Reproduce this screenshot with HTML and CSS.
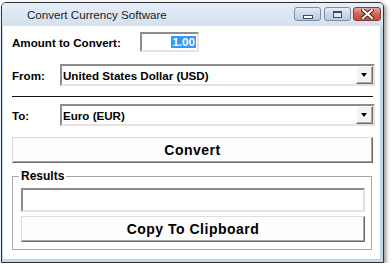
FILE: index.html
```html
<!DOCTYPE html>
<html lang="en">

<head>
	<meta charset="UTF-8">
	<title>Convert Currency Software</title>
	<link rel="stylesheet" href="styles.css">
</head>

<body>
	<div class="window">
		<div class="titlebar">
			<span class="title">Convert Currency Software</span>
			<div class="controls">
				<span class="ctl min"><i></i></span>
				<span class="ctl max"><i></i></span>
				<span class="ctl close">
					<svg width="13" height="10" viewBox="0 0 13 10">
						<path d="M2 1 L11 9 M11 1 L2 9" stroke="#3a2a2a" stroke-width="4" stroke-linecap="square" />
						<path d="M2 1 L11 9 M11 1 L2 9" stroke="#fff" stroke-width="2" stroke-linecap="square" />
					</svg>
				</span>
			</div>
		</div>

		<div class="client">
			<div class="row amount">
				<label>Amount to Convert:</label>
				<div class="field small"><span class="sel">1.00</span></div>
			</div>

			<div class="row pick">
				<label>From:</label>
				<div class="combo">
					<span class="value">United States Dollar (USD)</span>
					<span class="drop"></span>
				</div>
			</div>

			<div class="divider"></div>

			<div class="row pick to">
				<label>To:</label>
				<div class="combo">
					<span class="value">Euro (EUR)</span>
					<span class="drop"></span>
				</div>
			</div>

			<div class="btn convert">Convert</div>

			<fieldset class="results">
				<legend>Results</legend>
				<div class="field wide"></div>
				<div class="btn copy">Copy To Clipboard</div>
			</fieldset>
		</div>
	</div>
</body>

</html>
```

FILE: styles.css
```css
* {
	margin: 0;
	padding: 0;
	box-sizing: border-box;
}

body {
	background: #fff;
	font-family: "Liberation Sans", Arial, sans-serif;
	color: #000;
}

.window {
	width: 383px;
	height: 261px;
	margin: 2px 0 0 1px;
	border: 1px solid #2e3338;
	border-radius: 5px 5px 0 0;
	box-shadow: 2px 2px 4px rgba(0, 0, 0, 0.45);
	background: #c4d8ec;
	display: flex;
	flex-direction: column;
	overflow: hidden;
}

/* title bar */
.titlebar {
	height: 23px;
	display: flex;
	justify-content: space-between;
	align-items: flex-start;
	background: linear-gradient(#e6eef8, #d3e0ef);
}

.title {
	padding: 5px 0 0 25px;
	font-size: 11.6px;
	color: #1c1c1c;
}

.controls {
	display: flex;
	padding-top: 4px;
	padding-right: 2px;
}

.ctl {
	width: 27px;
	height: 14px;
	border: 1px solid #7a8ea8;
	border-radius: 3px;
	background: linear-gradient(#e4ecf6, #c9d7e9 55%, #b9cbe2);
	display: flex;
	align-items: center;
	justify-content: center;
}

.ctl.max {
	margin-left: 3px;
}

.ctl.close {
	width: 28px;
	margin-left: 2px;
	border-color: #8a3a33;
	background: linear-gradient(#e8a99c, #d2654f 50%, #c44d3a);
}

.min i {
	width: 10px;
	height: 4px;
	margin-top: 5px;
	border: 1px solid #3b4d66;
	background: #fff;
}

.max i {
	width: 9px;
	height: 7px;
	border: 1px solid #3b4d66;
	border-top-width: 2px;
	background: #dfe8f3;
}

/* window body */
.client {
	flex: 1;
	margin: 0 3px 3px 1px;
	background: #fff;
	padding: 6px 0 0 9px;
	font-size: 11.6px;
	font-weight: bold;
}

.row {
	display: flex;
	align-items: center;
}

.amount label {
	width: 128px;
}

.field {
	background: #fff;
	border: 2px solid;
	border-color: #8d8d8d #e3e3e3 #e3e3e3 #8d8d8d;
}

.field.small {
	width: 59px;
	height: 20px;
	display: flex;
	justify-content: flex-end;
	align-items: center;
	padding-right: 1px;
}

.sel {
	background: #3399ff;
	color: #fff;
	line-height: 12px;
	padding: 0 1px;
}

.pick {
	margin-top: 12px;
}

.pick label {
	width: 48px;
}

.pick.to {
	margin-top: 7px;
}

.combo {
	width: 315px;
	height: 22px;
	border: 2px solid;
	border-color: #8d8d8d #e3e3e3 #e3e3e3 #8d8d8d;
	display: flex;
	align-items: center;
	justify-content: space-between;
	padding-left: 1px;
}

.drop {
	width: 17px;
	height: 18px;
	background: #f3f3f3;
	border: 1px solid;
	border-color: #fff #6e6e6e #6e6e6e #fff;
	box-shadow: inset -1px -1px #a8a8a8;
	display: flex;
	align-items: center;
	justify-content: center;
}

.drop::after {
	content: "";
	border-left: 3px solid transparent;
	border-right: 3px solid transparent;
	border-top: 4px solid #000;
	margin-left: -1px;
}

.divider {
	width: 361px;
	height: 1px;
	margin-top: 10px;
	background: #111;
}

.btn {
	height: 26px;
	background: #fdfdfd;
	border: 1px solid;
	border-color: #dedede #6a6a6a #6a6a6a #dedede;
	box-shadow: inset -1px -1px #a4a4a4;
	display: flex;
	align-items: center;
	justify-content: center;
	font-size: 14px;
	letter-spacing: 0.5px;
}

.convert {
	width: 361px;
	margin-top: 11px;
}

.results {
	width: 360px;
	margin-top: 7px;
	border: 1px solid #a6a6a6;
	padding: 5px 6px 7px 8px;
}

.results legend {
	font-size: 12px;
	line-height: 13px;
	padding: 0 2px;
	margin-left: -2px;
}

.field.wide {
	height: 24px;
}

.copy {
	margin-top: 4px;
}
```
